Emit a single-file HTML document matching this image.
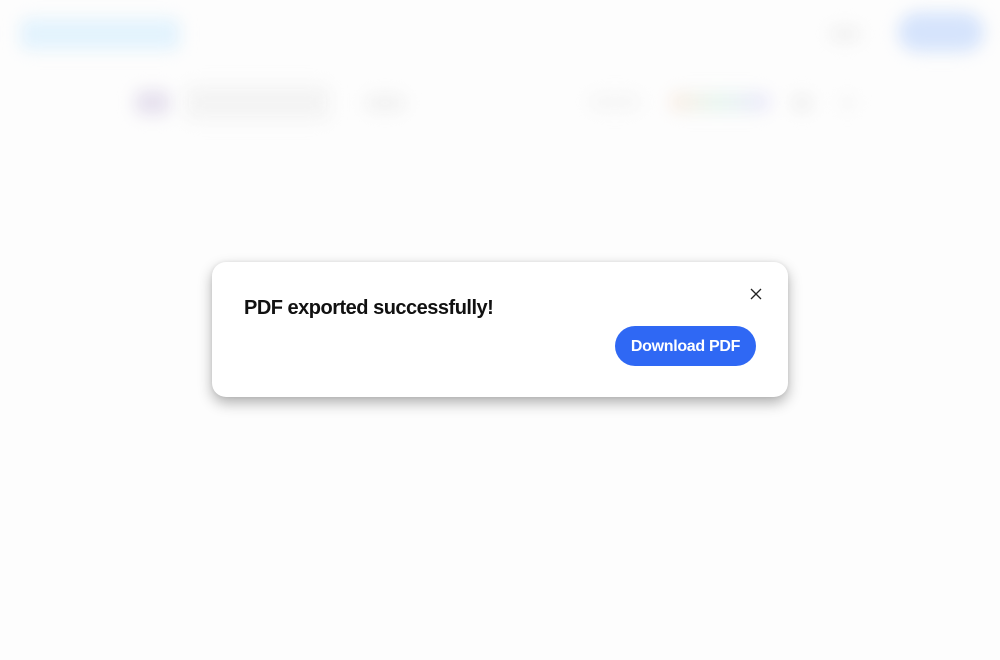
<!DOCTYPE html>
<html><head><style>
html,body{margin:0;padding:0;width:1000px;height:660px;background:#fdfdfd;overflow:hidden;font-family:"Liberation Sans",Arial,sans-serif;}
.b{position:absolute;filter:blur(8px);border-radius:8px;}
.modal{position:absolute;left:212px;top:262px;width:576px;height:135px;background:#fff;border-radius:14px;box-shadow:0 6px 14px rgba(0,0,0,0.3),0 0 4px rgba(0,0,0,0.08);}
.t{position:absolute;left:32px;top:35px;font-size:20px;font-weight:bold;color:#111;letter-spacing:-0.5px;}
.btn{position:absolute;left:403px;top:64px;width:141px;height:40px;background:#2f68f4;border-radius:20px;color:#fff;font-size:16px;font-weight:bold;line-height:41px;text-align:center;letter-spacing:-0.3px;}
.x{position:absolute;left:538px;top:26px;}
</style></head><body>
<div class="b" style="left:20px;top:18px;width:160px;height:32px;background:#e3f3fd;"></div>
<div class="b" style="left:830px;top:27px;width:30px;height:14px;background:#f0f0f0;"></div>
<div class="b" style="left:898px;top:12px;width:86px;height:40px;background:#d6e4fc;border-radius:20px;"></div>
<div class="b" style="left:135px;top:90px;width:35px;height:25px;background:#e6e1ee;"></div>
<div class="b" style="left:185px;top:85px;width:145px;height:35px;background:#f4f4f4;"></div>
<div class="b" style="left:365px;top:95px;width:40px;height:16px;background:#f1f1f1;"></div>
<div class="b" style="left:590px;top:95px;width:50px;height:14px;background:#f5f5f5;"></div>
<div class="b" style="left:670px;top:92px;width:100px;height:20px;background:linear-gradient(90deg,#fbeee5,#e8f6f0,#ece9fb);"></div>
<div class="b" style="left:792px;top:95px;width:20px;height:16px;background:#eeeeee;"></div>
<div class="b" style="left:840px;top:98px;width:15px;height:10px;background:#f4f4f4;"></div>
<div class="modal">
<div class="t">PDF exported successfully!</div>
<svg class="x" width="12" height="12" viewBox="0 0 12 12"><path d="M1 1L11 11M11 1L1 11" stroke="#222" stroke-width="1.3"/></svg>
<div class="btn">Download PDF</div>
</div>
</body></html>
